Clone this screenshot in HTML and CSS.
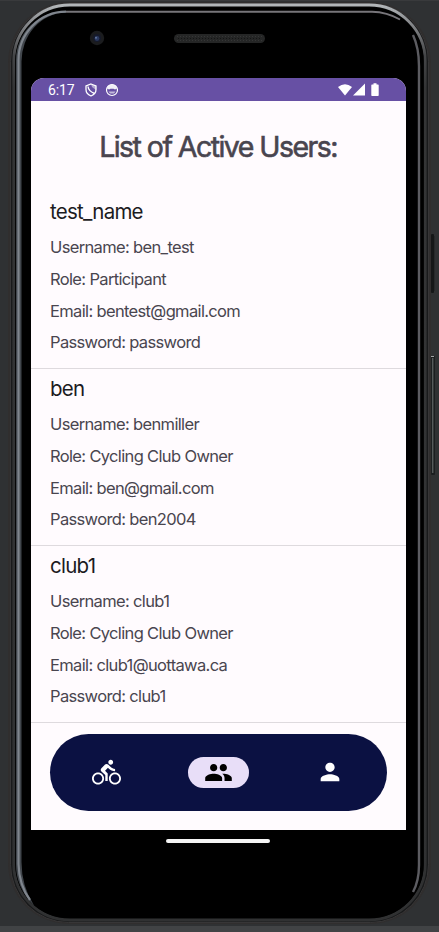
FILE: index.html
```html
<!DOCTYPE html>
<html lang="en">
<head>
<meta charset="utf-8">
<title>Active Users</title>
<link rel="stylesheet" href="styles.css">
</head>
<body>
<svg class="device" viewBox="0 0 439 932" aria-hidden="true">
  <defs>
    <linearGradient id="outer" x1="0" y1="0" x2="0" y2="1">
      <stop offset="0" stop-color="#b2b6b9"/><stop offset=".018" stop-color="#8b8d90"/><stop offset=".055" stop-color="#444547"/><stop offset=".09" stop-color="#343536"/><stop offset="1" stop-color="#303132"/>
    </linearGradient>
  </defs>
  <rect width="439" height="932" fill="#2f3133"/>
  <rect y="926" width="439" height="6" fill="#414345"/>
  <rect width="439" height="1" fill="#393a3c"/>
  <rect x="431" y="234" width="3" height="59" rx="1" fill="#151718"/>
  <path d="M434.500 236V291" stroke="#26292a"/>
  <rect x="431" y="356" width="4" height="119" rx="1" fill="#1b1e20"/>
  <path d="M432.700 358V473" stroke="#555a5b" stroke-width="1.5"/>
  <path d="M431 356.500h3" stroke="#a2a5a6"/>
  <rect x="8" y="2" width="423" height="922" rx="61" fill="#302e2e"/>
  <rect x="10.500" y="3.500" width="418" height="919" rx="58" fill="#191a1b" stroke="#373637"/>
  <rect x="13.800" y="5" width="411.400" height="915" rx="56" fill="#020303" stroke="url(#outer)" stroke-width="2.8"/>
  <rect x="15.500" y="8" width="408" height="910" rx="53" fill="#000"/>
  <path d="M66 11.700H372Q387 12 400 19.500" fill="none" stroke="#77757a" stroke-width="2"/>
  <path d="M413 35Q419 48 419 66V865Q419 881 413 892" fill="none" stroke="#5c5c61" stroke-width="2.4"/>
  <path d="M66 11A50 49 0 0 0 16 60V864Q16 888 34 905.500Q21.500 886 21.500 862V62A45 49 0 0 1 66 12.500Z" fill="#41464c"/>
  <path d="M66 11.700A47.500 48.500 0 0 0 18.500 60.500V864Q19 885 30 900" fill="none" stroke="#7f858d" stroke-width="2.2"/>
  <circle cx="97" cy="38" r="7.200" fill="#1b1c1e"/>
  <circle cx="97" cy="38" r="4" fill="#161a2b"/>
  <circle cx="97" cy="38.500" r="2.400" fill="#29385f"/>
  <circle cx="96" cy="37.800" r="1" fill="#63779d"/>
  <rect x="174" y="34" width="91" height="9" rx="4.500" fill="#252626"/>
  <path d="M177 36.500H262M177 40.500H262" stroke="#353636" stroke-dasharray="1 2"/>
  <path d="M178 38.500H262" stroke="#141515" stroke-dasharray="1 2"/>
</svg>

<main class="screen">
  <header class="status">
    <span class="clock">6:17</span>
    <svg class="shield" viewBox="0 0 12 14"><path d="M6 1 11 3V6.500Q11 11 6 13Q1 11 1 6.500V3Z" fill="none" stroke="#fff" stroke-width="1.3"/><path d="M3 3.500Q3.500 8 9.500 10.500" fill="none" stroke="#fff" stroke-width="1.4"/><path d="M6 1 11 3V7L7 4Z" fill="#fff" opacity=".5"/></svg>
    <svg class="face" viewBox="0 0 14 14"><circle cx="7" cy="7" r="5.500" fill="none" stroke="#fff" stroke-width="1.200"/><path d="M2 5.500Q3 1.500 7 1.500T12 5.500L10 6.500 8.500 5.800H5.500L4 6.500Z" fill="#fff" opacity=".9"/><path d="M3.500 8.500H10.500L9 10.500H5Z" fill="#fff" opacity=".6"/></svg>
    <svg class="signals" viewBox="0 0 44 14"><path d="M1 4Q8-1.500 15 4L8 12.500Z" fill="#fff"/><path d="M28 .5V12.500H16Z" fill="#fff"/><path d="M35 1.500h1.500V.3h3v1.200H41q.7 0 .7.7v10q0 .7-.7.7h-6q-.7 0-.7-.7v-10q0-.7.7-.7Z" fill="#fff"/></svg>
  </header>
  <h1 class="title">List of Active Users:</h1>
  <section class="users">
    <article class="user">
      <h2>test_name</h2>
      <p>Username: ben_test</p>
      <p>Role: Participant</p>
      <p>Email: bentest@gmail.com</p>
      <p>Password: password</p>
    </article>
    <article class="user">
      <h2>ben</h2>
      <p>Username: benmiller</p>
      <p>Role: Cycling Club Owner</p>
      <p>Email: ben@gmail.com</p>
      <p>Password: ben2004</p>
    </article>
    <article class="user">
      <h2>club1</h2>
      <p>Username: club1</p>
      <p>Role: Cycling Club Owner</p>
      <p>Email: club1@uottawa.ca</p>
      <p>Password: club1</p>
    </article>
  </section>
  <nav class="nav">
    <a class="tab"><svg class="icon" viewBox="0 0 24 24"><path fill="#fff" d="M15.500 5.500c1.100 0 2-.9 2-2s-.9-2-2-2-2 .9-2 2 .9 2 2 2zM5 12c-2.800 0-5 2.200-5 5s2.200 5 5 5 5-2.200 5-5-2.200-5-5-5zm0 8.500c-1.900 0-3.500-1.600-3.500-3.500s1.600-3.500 3.500-3.500 3.500 1.600 3.500 3.500-1.600 3.500-3.500 3.500zm5.800-10l2.400-2.400.8.800c1.300 1.300 3 2.100 5.100 2.100V9c-1.500 0-2.700-.6-3.600-1.500l-1.900-1.900c-.5-.4-1-.6-1.600-.6s-1.100.2-1.400.6L7.800 8.400c-.4.400-.6.900-.6 1.400 0 .6.200 1.100.6 1.400L11 14v5h2v-6.200l-2.200-2.300zM19 12c-2.800 0-5 2.200-5 5s2.200 5 5 5 5-2.200 5-5-2.200-5-5-5zm0 8.500c-1.900 0-3.500-1.600-3.500-3.500s1.600-3.500 3.500-3.500 3.500 1.600 3.500 3.500-1.600 3.500-3.500 3.500z"/></svg></a>
    <a class="tab active"><svg class="icon" viewBox="0 0 24 24"><path d="M16 11c1.660 0 2.990-1.340 2.990-3S17.660 5 16 5s-3 1.340-3 3 1.340 3 3 3zm-8 0c1.660 0 2.990-1.340 2.990-3S9.660 5 8 5 5 6.340 5 8s1.340 3 3 3zm0 2c-2.330 0-7 1.170-7 3.500V19h14v-2.500c0-2.330-4.670-3.500-7-3.500zm8 0c-.29 0-.62.020-.97.050 1.160.84 1.970 1.970 1.970 3.450V19h6v-2.500c0-2.330-4.670-3.500-7-3.500z"/></svg></a>
    <a class="tab"><svg class="icon" viewBox="0 0 24 24"><path fill="#fff" d="M12 12c2.210 0 4-1.790 4-4s-1.790-4-4-4-4 1.790-4 4 1.790 4 4 4zm0 2c-2.670 0-8 1.340-8 4v2h16v-2c0-2.660-5.330-4-8-4z"/></svg></a>
  </nav>
</main>
<div class="home"></div>
</body>
</html>
```
FILE: styles.css
```css
* { box-sizing: border-box; }
body {
  margin: 0;
  width: 439px;
  height: 932px;
  overflow: hidden;
  position: relative;
  padding-top: 78px;
  font-family: Inter, "Liberation Sans", sans-serif;
}
.device { position: absolute; inset: 0; z-index: -1; width: 439px; height: 932px; }
.screen {
  display: flex;
  flex-direction: column;
  width: 375px;
  height: 752px;
  margin-left: 31px;
  background: #fffbfe;
  border-radius: 13px 13px 0 0;
  overflow: hidden;
}
.status {
  display: flex;
  align-items: center;
  flex: none;
  height: 23px;
  padding: 0 25px 0 17px;
  background: #6750a4;
  color: #fff;
}
.clock { width: 37px; font: 14px/24px Roboto, sans-serif; letter-spacing: -.1px; }
.shield { width: 12px; height: 14px; }
.face { width: 14px; height: 14px; margin-left: 8px; }
.signals { width: 44px; height: 14px; margin-left: auto; }
.title {
  margin: 25px 0 25px;
  padding-right: 1px;
  text-align: center;
  font-size: 28.5px;
  line-height: 41px;
  font-weight: 400;
  -webkit-text-stroke: .6px #49454f;
  letter-spacing: -1.55px;
  color: #49454f;
}
.user {
  height: 177px;
  padding: 7px 19px 0;
  border-bottom: 1px solid #dedade;
}
.user h2 {
  margin: 0 0 7px;
  font-size: 20.5px;
  line-height: 26px;
  font-weight: 400;
  letter-spacing: -.75px;
  color: #1c1b1f;
}
.user p {
  margin: 0;
  font-size: 16.5px;
  font-weight: 400;
  line-height: 31.75px;
  letter-spacing: -.65px;
  color: #49454f;
}
.nav {
  display: flex;
  justify-content: space-between;
  align-items: center;
  flex: none;
  width: 337px;
  height: 77px;
  margin: 11px 19px 0;
  padding: 0 26px;
  border-radius: 39px;
  background: #0b1142;
}
.tab { display: flex; align-items: center; justify-content: center; width: 61px; height: 31px; border-radius: 16px; }
.active { background: #e8def8; }
.icon { width: 29px; height: 29px; }
.tab:first-child .icon { margin-left: -1px; }
.tab:last-child .icon { width: 28px; height: 28px; margin-top: -2px; margin-left: -1px; }
.home { width: 104px; height: 4px; margin: 9px 0 0 166px; border-radius: 2px; background: #f5f5f5; }
```
